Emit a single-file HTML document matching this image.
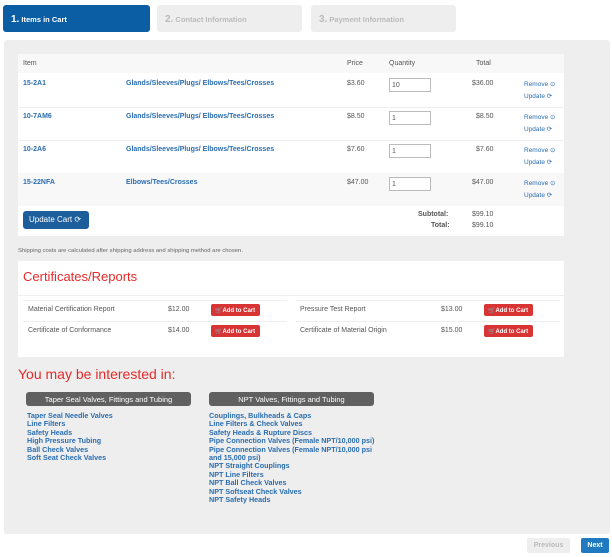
<!DOCTYPE html>
<html><head><style>
*{margin:0;padding:0;box-sizing:border-box}
body{width:612px;height:557px;background:#fff;font-family:"Liberation Sans",sans-serif;position:relative;overflow:hidden;color:#444}
.a{position:absolute;white-space:nowrap}
.tab{position:absolute;top:5px;height:27px;border-radius:3px;background:#eee;color:#bbb;font-size:7.5px;font-weight:bold;padding:9px 0 0 8px}
.tab b{font-size:10px}
.l{color:#2a6db0;font-weight:bold;font-size:7px}
.s{font-size:7px;color:#555}
.inp{position:absolute;width:42px;height:14px;border:1px solid #bbb;background:#fff;font-size:7px;padding:3px 2px;color:#555}
.btn{position:absolute;width:49px;height:12px;background:#d83434;border-radius:2px;color:#fff;font-size:6px;padding:2.5px 0 0 4px;font-weight:bold;white-space:nowrap;overflow:hidden}
.rl{position:absolute;color:#2a6db0;font-size:6.5px;white-space:nowrap}
.gh{position:absolute;height:14px;background:#606060;border-radius:3px;color:#fff;font-size:7.5px;text-align:center;padding-top:3px}
.lk{position:absolute;color:#2a6db0;font-weight:bold;font-size:7.2px;line-height:8.4px}
</style></head><body>
<div class="tab" style="left:3px;width:147px;background:#0b5ea3;color:#fff"><b>1.</b> Items in Cart</div>
<div class="tab" style="left:157px;width:145px"><b>2.</b> Contact Information</div>
<div class="tab" style="left:311px;width:145px"><b>3.</b> Payment Information</div>
<div class="a" style="left:4px;top:40px;width:606px;height:494px;background:#eee;border-radius:3px"></div>
<div class="a" style="left:18px;top:54px;width:546px;height:182px;background:#fff"></div>
<div class="a" style="left:18px;top:54px;width:546px;height:19px;background:#f8f8f8"></div>
<div class="a" style="left:18px;top:107px;width:546px;height:1px;background:#eee"></div>
<div class="a" style="left:18px;top:140px;width:546px;height:1px;background:#eee"></div>
<div class="a" style="left:18px;top:173px;width:546px;height:33px;background:#f8f8f8"></div>
<div class="a s" style="left:23px;top:60px">Item</div>
<div class="a s" style="left:347px;top:60px">Price</div>
<div class="a s" style="left:389px;top:60px">Quantity</div>
<div class="a s" style="left:476px;top:60px">Total</div>

<div class="a l" style="left:23px;top:80px">15-2A1</div><div class="a l" style="left:126px;top:80px">Glands/Sleeves/Plugs/ Elbows/Tees/Crosses</div><div class="a s" style="left:347px;top:80px">$3.60</div><div class="inp" style="left:389px;top:78px">10</div><div class="a s" style="left:472px;top:80px">$36.00</div>
<div class="rl" style="left:524px;top:80px">Remove ⊙</div><div class="rl" style="left:524px;top:92px">Update ⟳</div>

<div class="a l" style="left:23px;top:113px">10-7AM6</div><div class="a l" style="left:126px;top:113px">Glands/Sleeves/Plugs/ Elbows/Tees/Crosses</div><div class="a s" style="left:347px;top:113px">$8.50</div><div class="inp" style="left:389px;top:111px">1</div><div class="a s" style="left:476px;top:113px">$8.50</div>
<div class="rl" style="left:524px;top:113px">Remove ⊙</div><div class="rl" style="left:524px;top:125px">Update ⟳</div>

<div class="a l" style="left:23px;top:146px">10-2A6</div><div class="a l" style="left:126px;top:146px">Glands/Sleeves/Plugs/ Elbows/Tees/Crosses</div><div class="a s" style="left:347px;top:146px">$7.60</div><div class="inp" style="left:389px;top:144px">1</div><div class="a s" style="left:476px;top:146px">$7.60</div>
<div class="rl" style="left:524px;top:146px">Remove ⊙</div><div class="rl" style="left:524px;top:158px">Update ⟳</div>

<div class="a l" style="left:23px;top:179px">15-22NFA</div><div class="a l" style="left:126px;top:179px">Elbows/Tees/Crosses</div><div class="a s" style="left:347px;top:179px">$47.00</div><div class="inp" style="left:389px;top:177px">1</div><div class="a s" style="left:472px;top:179px">$47.00</div>
<div class="rl" style="left:524px;top:179px">Remove ⊙</div><div class="rl" style="left:524px;top:191px">Update ⟳</div>

<div class="a" style="left:23px;top:211px;width:66px;height:18px;background:#1d5e9c;border-radius:3px;color:#fff;font-size:8px;padding:4px 0 0 6px">Update Cart ⟳</div>
<div class="a s" style="left:418px;top:211px;font-weight:bold">Subtotal:</div><div class="a s" style="left:472px;top:211px">$99.10</div>
<div class="a s" style="left:431px;top:222px;font-weight:bold">Total:</div><div class="a s" style="left:472px;top:222px">$99.10</div>

<div class="a" style="left:18px;top:248px;font-size:5.9px;color:#666">Shipping costs are calculated after shipping address and shipping method are chosen.</div>
<div class="a" style="left:18px;top:261px;width:546px;height:96px;background:#fff"></div>
<div class="a" style="left:23px;top:269px;font-size:13px;color:#e52a2a">Certificates/Reports</div>
<div class="a" style="left:18px;top:295px;width:546px;height:1px;background:#eee"></div>
<div class="a" style="left:23px;top:300px;width:264px;height:1px;background:#eee"></div>
<div class="a" style="left:296px;top:300px;width:264px;height:1px;background:#eee"></div>
<div class="a" style="left:23px;top:321px;width:264px;height:1px;background:#eee"></div>
<div class="a" style="left:296px;top:321px;width:264px;height:1px;background:#eee"></div>
<div class="a s" style="left:28px;top:306px">Material Certification Report</div><div class="a s" style="left:168px;top:306px">$12.00</div><div class="btn" style="left:211px;top:304px">🛒Add to Cart</div>
<div class="a s" style="left:300px;top:306px">Pressure Test Report</div><div class="a s" style="left:441px;top:306px">$13.00</div><div class="btn" style="left:484px;top:304px">🛒Add to Cart</div>
<div class="a s" style="left:28px;top:327px">Certificate of Conformance</div><div class="a s" style="left:168px;top:327px">$14.00</div><div class="btn" style="left:211px;top:325px">🛒Add to Cart</div>
<div class="a s" style="left:300px;top:327px">Certificate of Material Origin</div><div class="a s" style="left:441px;top:327px">$15.00</div><div class="btn" style="left:484px;top:325px">🛒Add to Cart</div>

<div class="a" style="left:18px;top:366px;font-size:14px;color:#e52a2a">You may be interested in:</div>
<div class="gh" style="left:26px;top:392px;width:165px">Taper Seal Valves, Fittings and Tubing</div>
<div class="gh" style="left:209px;top:392px;width:165px">NPT Valves, Fittings and Tubing</div>
<div class="lk" style="left:27px;top:412px">Taper Seal Needle Valves<br>Line Filters<br>Safety Heads<br>High Pressure Tubing<br>Ball Check Valves<br>Soft Seat Check Valves</div>
<div class="lk" style="left:209px;top:412px">Couplings, Bulkheads &amp; Caps<br>Line Filters &amp; Check Valves<br>Safety Heads &amp; Rupture Discs<br>Pipe Connection Valves (Female NPT/10,000 psi)<br>Pipe Connection Valves (Female NPT/10,000 psi<br>and 15,000 psi)<br>NPT Straight Couplings<br>NPT Line Filters<br>NPT Ball Check Valves<br>NPT Softseat Check Valves<br>NPT Safety Heads</div>

<div class="a" style="left:527px;top:538px;width:43px;height:15px;background:#eee;border-radius:2px;color:#bbb;font-size:7px;font-weight:bold;text-align:center;padding-top:4px">Previous</div>
<div class="a" style="left:581px;top:538px;width:28px;height:15px;background:#1f7ac0;border-radius:2px;color:#fff;font-size:7px;font-weight:bold;text-align:center;padding-top:4px">Next</div>
</body></html>
